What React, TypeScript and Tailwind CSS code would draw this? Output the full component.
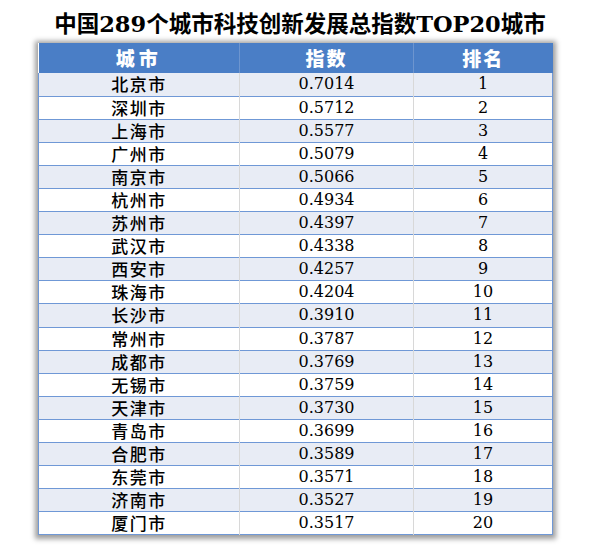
import React from "react";

const rows: [string, string, number][] = [
  ["北京市", "0.7014", 1],
  ["深圳市", "0.5712", 2],
  ["上海市", "0.5577", 3],
  ["广州市", "0.5079", 4],
  ["南京市", "0.5066", 5],
  ["杭州市", "0.4934", 6],
  ["苏州市", "0.4397", 7],
  ["武汉市", "0.4338", 8],
  ["西安市", "0.4257", 9],
  ["珠海市", "0.4204", 10],
  ["长沙市", "0.3910", 11],
  ["常州市", "0.3787", 12],
  ["成都市", "0.3769", 13],
  ["无锡市", "0.3759", 14],
  ["天津市", "0.3730", 15],
  ["青岛市", "0.3699", 16],
  ["合肥市", "0.3589", 17],
  ["东莞市", "0.3571", 18],
  ["济南市", "0.3527", 19],
  ["厦门市", "0.3517", 20],
];

export default function App() {
  return (
    <div className="w-[600px] h-[552px] bg-white">
      <h1 className="pt-[10px] h-[43px] text-center text-[22.5px] leading-[28px] font-bold text-black [font-family:'DejaVu_Serif','Noto_Sans_CJK_SC',serif]">
        中国289个城市科技创新发展总指数TOP20城市
      </h1>

      <div className="ml-[38px] w-[515px] shadow-[0_1px_5px_3px_rgba(0,0,0,0.38)]">
        <table className="w-full border-collapse table-fixed">
          <thead>
            <tr className="h-[30px] bg-[#4a7ec6] text-white text-[19px] leading-[24px] font-bold [font-family:'Noto_Sans_CJK_SC',sans-serif]">
              <th className="w-[201px] border-r border-[#6d95cf] tracking-[4px] font-black">城市</th>
              <th className="w-[174px] border-r border-[#6d95cf] tracking-[2px] font-black">指数</th>
              <th className="font-black tracking-[2px]">排名</th>
            </tr>
          </thead>
          <tbody>
            {rows.map((r, i) => (
              <tr
                key={i}
                className={
                  "h-[23.1px] border-b border-[#6f98d6] " +
                  (i % 2 === 0 ? "bg-[#e8ecf5]" : "bg-white")
                }
              >
                <td className="p-0 border-l border-[#6f98d6] border-r border-r-[#d8d8d8] text-center text-[17px] leading-[20px] font-medium text-black [font-family:'Noto_Sans_CJK_SC',serif] tracking-[1.5px]">
                  {r[0]}
                </td>
                <td className="p-0 border-r border-[#d8d8d8] text-center text-[16px] leading-[20px] text-black [font-family:'DejaVu_Serif',serif]">
                  {r[1]}
                </td>
                <td className="p-0 border-r border-[#6f98d6] text-center text-[16px] leading-[20px] text-black [font-family:'DejaVu_Serif',serif]">
                  {r[2]}
                </td>
              </tr>
            ))}
          </tbody>
        </table>
      </div>
    </div>
  );
}
